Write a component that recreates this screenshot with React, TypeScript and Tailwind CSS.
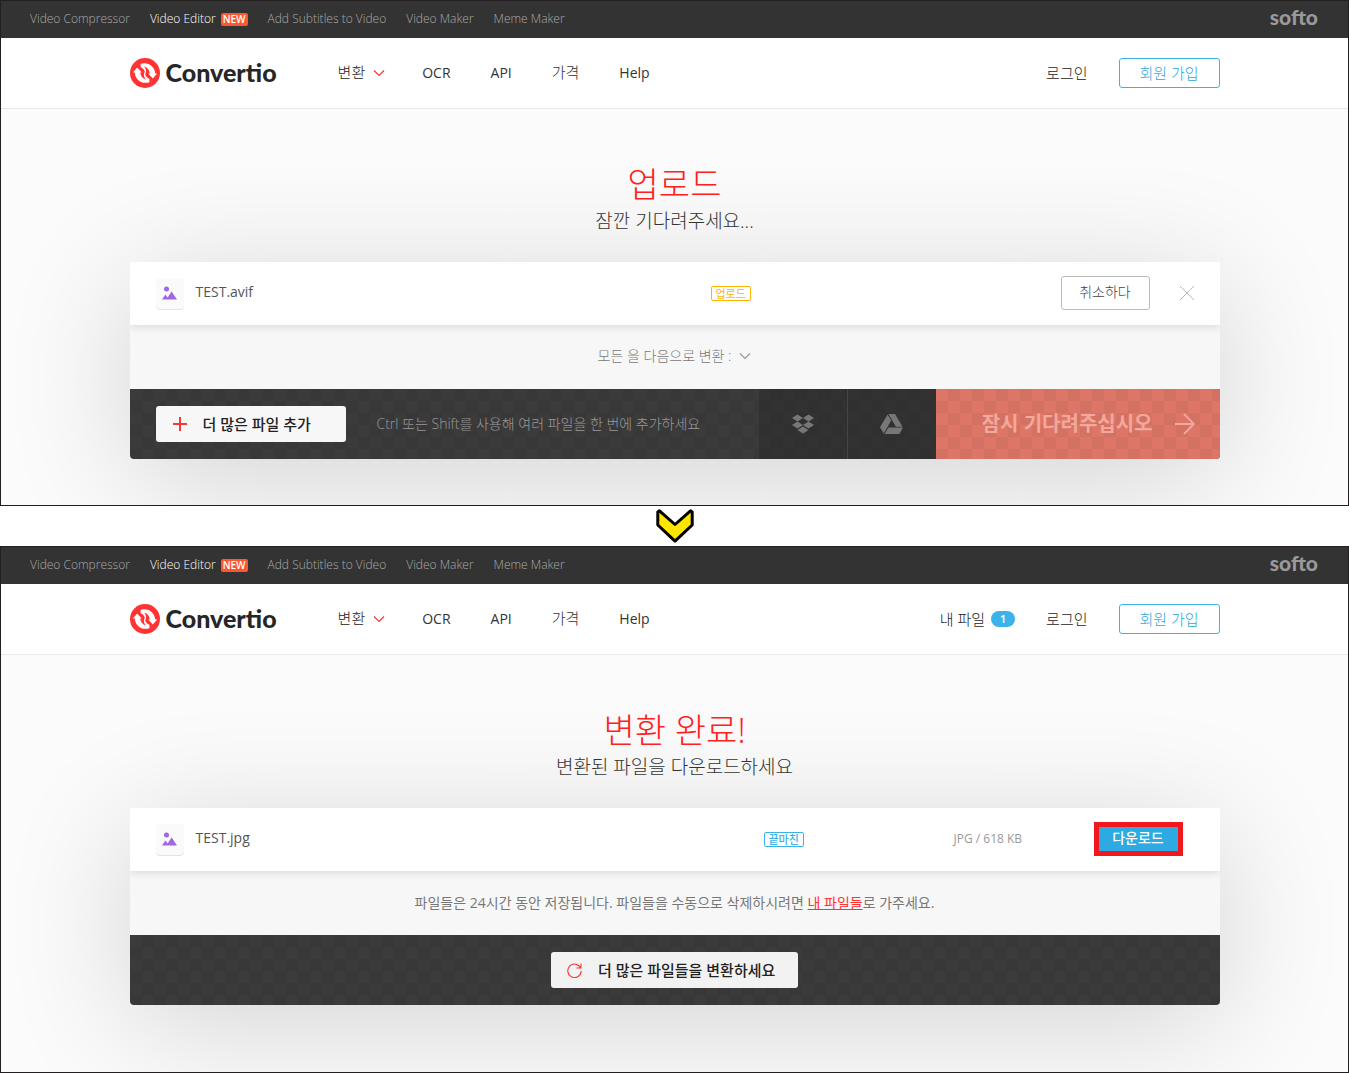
import React, { ReactNode } from 'react';

type ScreenProps = {
  title: string;
  subtitle: string;
  files?: number;
  className: string;
  children: ReactNode;
};

const checkered =
  'bg-[conic-gradient(#383838_25%,#3b3b3b_0_50%,#383838_0_75%,#3b3b3b_0)] bg-[length:24px_24px]';
const checkeredDark =
  'bg-[conic-gradient(#303030_25%,#323232_0_50%,#303030_0_75%,#323232_0)] bg-[length:24px_24px]';
const checkeredRed =
  'bg-[conic-gradient(#d37262_25%,#de7667_0_50%,#d37262_0_75%,#de7667_0)] bg-[length:24px_24px]';

function Chevron({ className }: { className: string }) {
  return (
    <svg viewBox="0 0 12 8" className={`h-2 w-3 fill-none ${className}`}>
      <path d="M1 1.5 6 6.5 11 1.5" stroke="currentColor" strokeWidth="1.2" />
    </svg>
  );
}

function Logo() {
  return (
    <a href="#" className="flex items-center gap-[6px] text-[#262626]">
      <svg viewBox="0 0 30 30" className="size-[30px]">
        <circle cx="15" cy="15" r="15" fill="#ff3333" />
        <path
          d="M7.2 9.4 11.8 14.4H10.2C10.6 18 12.6 20.4 15.8 21.4 13.8 19 13.4 16 14.6 13.6 15 17.6 16.4 20 19.4 20.8V24.2C12 26.6 5.2 21.8 4.8 14.4H2.8Z"
          fill="#fff"
        />
        <path
          d="M22.8 20.6 18.2 15.6H19.8C19.4 12 17.4 9.6 14.2 8.6 16.2 11 16.6 14 15.4 16.4 15 12.4 13.6 10 10.6 9.2V5.8C18 3.4 24.8 8.2 25.2 15.6H27.2Z"
          fill="#fff"
        />
      </svg>
      <span className="pb-[2px] font-['Lato',sans-serif] text-[25px] leading-7 font-black">
        Convertio
      </span>
    </a>
  );
}

function TopBar() {
  return (
    <div className="flex h-[37px] items-center justify-between bg-[#333] pr-[30px] pl-[29px] text-xs text-[#aaa]">
      <nav className="flex items-center gap-5 pb-px font-light">
        <a href="#">Video Compressor</a>
        <a href="#" className="flex items-center gap-[5px] text-white">
          Video Editor
          <span className="rounded-xs bg-[#ff5630] px-[2px] text-[10px] leading-[13px] font-semibold">
            NEW
          </span>
        </a>
        <a href="#">Add Subtitles to Video</a>
        <a href="#">Video Maker</a>
        <a href="#">Meme Maker</a>
      </nav>
      <a
        href="#"
        className="pb-[6px] font-['Lato',sans-serif] text-[21px] leading-6 font-black text-[#999]"
      >
        softo
      </a>
    </div>
  );
}

function Header({ files }: { files?: number }) {
  return (
    <header className="h-[71px] border-b border-[#e8e8e8] bg-white text-[#222]">
      <div className="mx-auto flex h-full max-w-[1090px] items-center">
        <Logo />
        <nav className="ml-[61px] flex items-center text-sm">
          <button className="mr-[37px] flex items-center gap-2 text-[15px] font-light">
            변환 <Chevron className="text-[#ff3333]" />
          </button>
          <div className="flex items-center gap-10 text-[#333]">
            <a href="#">OCR</a>
            <a href="#">API</a>
            <a href="#" className="text-[15px] font-light">
              가격
            </a>
            <a href="#">Help</a>
          </div>
        </nav>
        <div className="ml-auto flex items-center gap-[31px] text-[15px] font-light">
          {files ? (
            <a href="#" className="flex items-center gap-[6px]">
              내 파일
              <span className="w-6 rounded-full bg-[#3bb3e8] text-center text-[11px] leading-4 font-semibold text-white">
                {files}
              </span>
            </a>
          ) : null}
          <a href="#">로그인</a>
          <a
            href="#"
            className="w-[101px] rounded-[3px] border border-[#3bb3e8] text-center leading-7 text-[#2ba8e2]"
          >
            회원 가입
          </a>
        </div>
      </div>
    </header>
  );
}

function FileIcon() {
  return (
    <span className="flex h-[31px] w-7 items-center justify-center rounded-sm bg-[#fafafa] shadow-[0_1px_0_#e4e4e4]">
      <svg viewBox="0 0 15 14" className="h-[14px] w-[15px] fill-[#a066e6]">
        <circle cx="4.5" cy="3" r="2.5" />
        <path d="M0 13.5 3.4 8.6 5.6 11.4 9.6 5.6 15 13.5Z" />
      </svg>
    </span>
  );
}

function FileRow({ name, children }: { name: string; children: ReactNode }) {
  return (
    <div className="relative flex h-[63px] items-center bg-white pb-px pl-[26px] shadow-[0_2px_8px_rgba(0,0,0,0.12)]">
      <FileIcon />
      <span className="ml-3 flex-1 pb-[2px] text-sm text-[#555]">{name}</span>
      {children}
    </div>
  );
}

function Screen({ title, subtitle, files, className, children }: ScreenProps) {
  return (
    <section
      className={`overflow-hidden border border-[#231f20] bg-[#fbfbfb] ${className}`}
    >
      <div className="relative z-10">
        <TopBar />
        <Header files={files} />
      </div>
      <main className="mx-auto max-w-[1090px] pt-[52px]">
        <div className="relative z-10 text-center">
          <h1 className="text-[34px] leading-[46px] font-light text-[#ff2020]">
            {title}
          </h1>
          <p className="text-[19px] leading-7 font-light text-[#333]">
            {subtitle}
          </p>
        </div>
        <div className="mt-[27px] rounded-b-sm shadow-[0_20px_125px_rgba(0,0,0,0.16)]">
          <div className="overflow-hidden rounded-b-sm bg-[#f7f7f7]">
            {children}
          </div>
        </div>
      </main>
    </section>
  );
}

export default function App() {
  return (
    <div className="bg-white font-['Open_Sans','Noto_Sans_CJK_KR',sans-serif]">
      <Screen title="업로드" subtitle="잠깐 기다려주세요..." className="pb-[46px]">
        <FileRow name="TEST.avif">
          <div className="flex w-[350px]">
            <span className="rounded-xs border border-[#ffb400] px-1 text-[11px] leading-[13px] text-[#ffb400]">
              업로드
            </span>
          </div>
          <button className="h-[34px] w-[89px] rounded-[3px] border border-[#bbb] pb-[2px] text-sm font-light text-[#444]">
            취소하다
          </button>
          <button aria-label="삭제" className="mr-[26px] ml-[30px]">
            <svg viewBox="0 0 14 14" className="size-[14px]">
              <path d="M0 0 14 14M14 0 0 14" stroke="#bbb" />
            </svg>
          </button>
        </FileRow>
        <div className="flex h-16 items-center justify-center pb-[2px]">
          <button className="flex items-center gap-2 text-sm font-light text-[#777]">
            모든 을 다음으로 변환 : <Chevron className="text-[#999]" />
          </button>
        </div>
        <div className={`flex h-[70px] items-center ${checkered}`}>
          <button className="ml-[26px] flex h-9 w-[190px] items-center gap-4 rounded-[3px] bg-[#f7f7f7] pl-[17px] text-[15px] font-medium text-[#222]">
            <svg viewBox="0 0 14 14" className="size-[14px]">
              <path d="M7 0V14M0 7H14" stroke="#ff3333" strokeWidth="2" />
            </svg>
            더 많은 파일 추가
          </button>
          <p className="ml-[31px] flex-1 text-sm font-light text-[#999]">
            Ctrl 또는 Shift를 사용해 여러 파일을 한 번에 추가하세요
          </p>
          <button
            aria-label="Dropbox"
            className={`flex h-full w-[89px] items-center justify-center border-r border-[#444] ${checkeredDark}`}
          >
            <svg viewBox="0 0 22 20" className="h-5 w-[22px] fill-[#777]">
              <path d="M5.5 0.5 11 4 5.5 7.5 0 4ZM16.5 0.5 22 4 16.5 7.5 11 4ZM5.5 7.5 11 11 5.5 14.5 0 11ZM16.5 7.5 22 11 16.5 14.5 11 11ZM11 12.5 16.5 16 11 19.5 5.5 16Z" />
            </svg>
          </button>
          <button
            aria-label="Google Drive"
            className={`flex h-full w-[88px] items-center justify-center ${checkeredDark}`}
          >
            <svg viewBox="0 0 23 20" className="h-5 w-[23px] fill-[#777]">
              <path d="M7.6 0.4 11.2 6.6 3.8 19.6 0 13.2ZM8.4 0H15L22.6 12.8H15.9ZM8.4 13.6H23L19.4 20H4.7Z" />
            </svg>
          </button>
          <button
            className={`flex h-full w-[284px] items-center justify-end gap-[22px] pr-[25px] text-xl font-bold text-[#f2a89c] ${checkeredRed}`}
          >
            잠시 기다려주십시오
            <svg viewBox="0 0 20 22" className="h-[22px] w-5 fill-none">
              <path d="M0 11H19M9 1 19 11 9 21" stroke="#f2a89c" strokeWidth="1.8" />
            </svg>
          </button>
        </div>
      </Screen>

      <div className="flex h-10 items-center justify-center">
        <svg viewBox="0 0 38 34" className="h-[34px] w-[38px]">
          <path
            d="M3.5 1.8 19 15.5 34.5 1.8 36.2 3V16L19 32.2 1.8 16V3Z"
            fill="#ffe600"
            stroke="#000"
            strokeWidth="3"
            strokeLinejoin="round"
          />
        </svg>
      </div>

      <Screen
        title="변환 완료!"
        subtitle="변환된 파일을 다운로드하세요"
        files={1}
        className="pb-[67px]"
      >
        <FileRow name="TEST.jpg">
          <div className="flex w-[190px]">
            <span className="rounded-xs border border-[#3bb3e8] px-1 text-[11px] leading-[13px] font-medium text-[#3bb3e8]">
              끝마친
            </span>
          </div>
          <span className="w-[140px] text-xs text-[#999]">JPG / 618 KB</span>
          <button className="mr-[37px] h-[34px] w-[89px] border-[5px] border-[#f0171f] bg-[#2caae1] pb-[2px] text-sm leading-5 font-medium text-white">
            다운로드
          </button>
        </FileRow>
        <p className="text-center text-sm leading-[64px] text-[#777]">
          파일들은 24시간 동안 저장됩니다. 파일들을 수동으로 삭제하시려면{' '}
          <a href="#" className="text-[#ff3333] underline">
            내 파일들
          </a>
          로 가주세요.
        </p>
        <div className={`flex h-[70px] items-center justify-center ${checkered}`}>
          <button className="flex h-9 w-[247px] items-center gap-4 rounded-[3px] bg-[#f2f2f2] pl-4 text-[15px] font-medium text-[#222]">
            <svg viewBox="0 0 15 15" className="size-[15px] fill-none">
              <path
                d="M13.6 5A6.7 6.7 0 1 0 14.2 8M14 0.5V5H9.5"
                stroke="#ff3333"
                strokeWidth="1.1"
              />
            </svg>
            더 많은 파일들을 변환하세요
          </button>
        </div>
      </Screen>
    </div>
  );
}
